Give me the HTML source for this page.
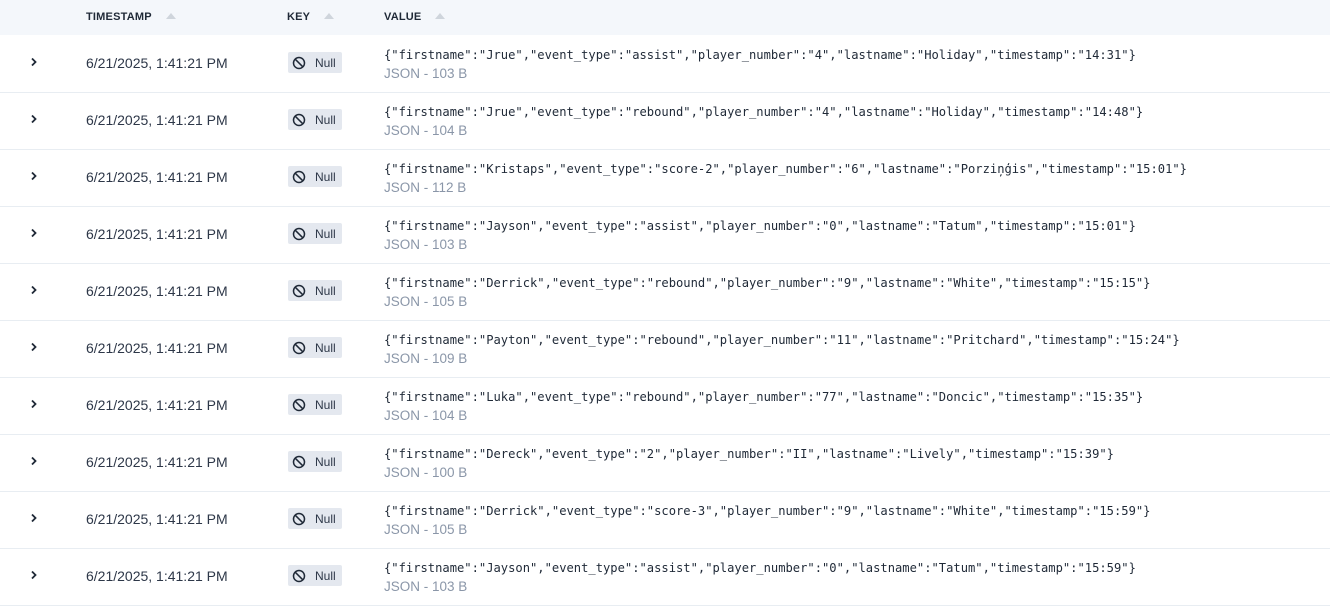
<!DOCTYPE html>
<html><head><meta charset="utf-8"><style>
body{margin:0;width:1330px;height:607px;background:#fff;font-family:"Liberation Sans",sans-serif;overflow:hidden;position:relative}
.hdr{position:absolute;left:0;top:0;width:1330px;height:35px;background:#f4f7fb}
.h{position:absolute;top:11px;font-size:11px;font-weight:bold;color:#1f2937;letter-spacing:0.2px}
.h span{display:inline-block;margin-left:14px;width:0;height:0;border-left:5px solid transparent;border-right:5px solid transparent;border-bottom:6px solid #cfd5dc;vertical-align:1px}
.row{position:absolute;left:0;width:1330px;height:57px;border-bottom:1px solid #e8edf2}
.chev{position:absolute;left:29px;top:22px}
.ts{position:absolute;left:86px;top:20px;font-size:14px;color:#2d3748}
.badge{position:absolute;left:288px;top:17px;width:54px;height:21px;background:#e4e8ef;border-radius:2px;font-size:12px;color:#2d3748}
.badge svg{position:absolute;left:4px;top:3.5px}
.badge b{font-weight:normal;position:absolute;left:27px;top:4px}
.val{position:absolute;left:384px;top:13px;font-family:"DejaVu Sans Mono","Liberation Mono",monospace;font-size:12.13px;color:#1f2937;white-space:pre}
.sz{position:absolute;left:384px;top:31px;font-size:13.5px;color:#8a96a8}
</style></head><body>
<div class="hdr"></div>
<div class="h" style="left:86px">TIMESTAMP<span></span></div>
<div class="h" style="left:287px">KEY<span></span></div>
<div class="h" style="left:384px">VALUE<span></span></div>
<div id="rows"></div>
<script>
var d=[
['{"firstname":"Jrue","event_type":"assist","player_number":"4","lastname":"Holiday","timestamp":"14:31"}','103'],
['{"firstname":"Jrue","event_type":"rebound","player_number":"4","lastname":"Holiday","timestamp":"14:48"}','104'],
['{"firstname":"Kristaps","event_type":"score-2","player_number":"6","lastname":"Porziņģis","timestamp":"15:01"}','112'],
['{"firstname":"Jayson","event_type":"assist","player_number":"0","lastname":"Tatum","timestamp":"15:01"}','103'],
['{"firstname":"Derrick","event_type":"rebound","player_number":"9","lastname":"White","timestamp":"15:15"}','105'],
['{"firstname":"Payton","event_type":"rebound","player_number":"11","lastname":"Pritchard","timestamp":"15:24"}','109'],
['{"firstname":"Luka","event_type":"rebound","player_number":"77","lastname":"Doncic","timestamp":"15:35"}','104'],
['{"firstname":"Dereck","event_type":"2","player_number":"II","lastname":"Lively","timestamp":"15:39"}','100'],
['{"firstname":"Derrick","event_type":"score-3","player_number":"9","lastname":"White","timestamp":"15:59"}','105'],
['{"firstname":"Jayson","event_type":"assist","player_number":"0","lastname":"Tatum","timestamp":"15:59"}','103']];
var h='';
d.forEach(function(r,i){
var v=r[0].replace(/&/g,'&amp;').replace(/</g,'&lt;');
h+='<div class="row" style="top:'+(35+i*57)+'px"><svg class="chev" width="10" height="10" viewBox="0 0 10 10"><path d="M3 1.5L6.5 5L3 8.5" fill="none" stroke="#1f2937" stroke-width="1.8"/></svg><div class="ts">6/21/2025, 1:41:21 PM</div><div class="badge"><svg width="14" height="14" viewBox="0 0 14 14"><circle cx="7" cy="7" r="5.5" fill="none" stroke="#1f2937" stroke-width="1.5"/><path d="M3.2 3.2L10.8 10.8" stroke="#1f2937" stroke-width="1.5"/></svg><b>Null</b></div><div class="val">'+v+'</div><div class="sz">JSON - '+r[1]+' B</div></div>';
});
document.getElementById('rows').innerHTML=h;
</script>
</body></html>
